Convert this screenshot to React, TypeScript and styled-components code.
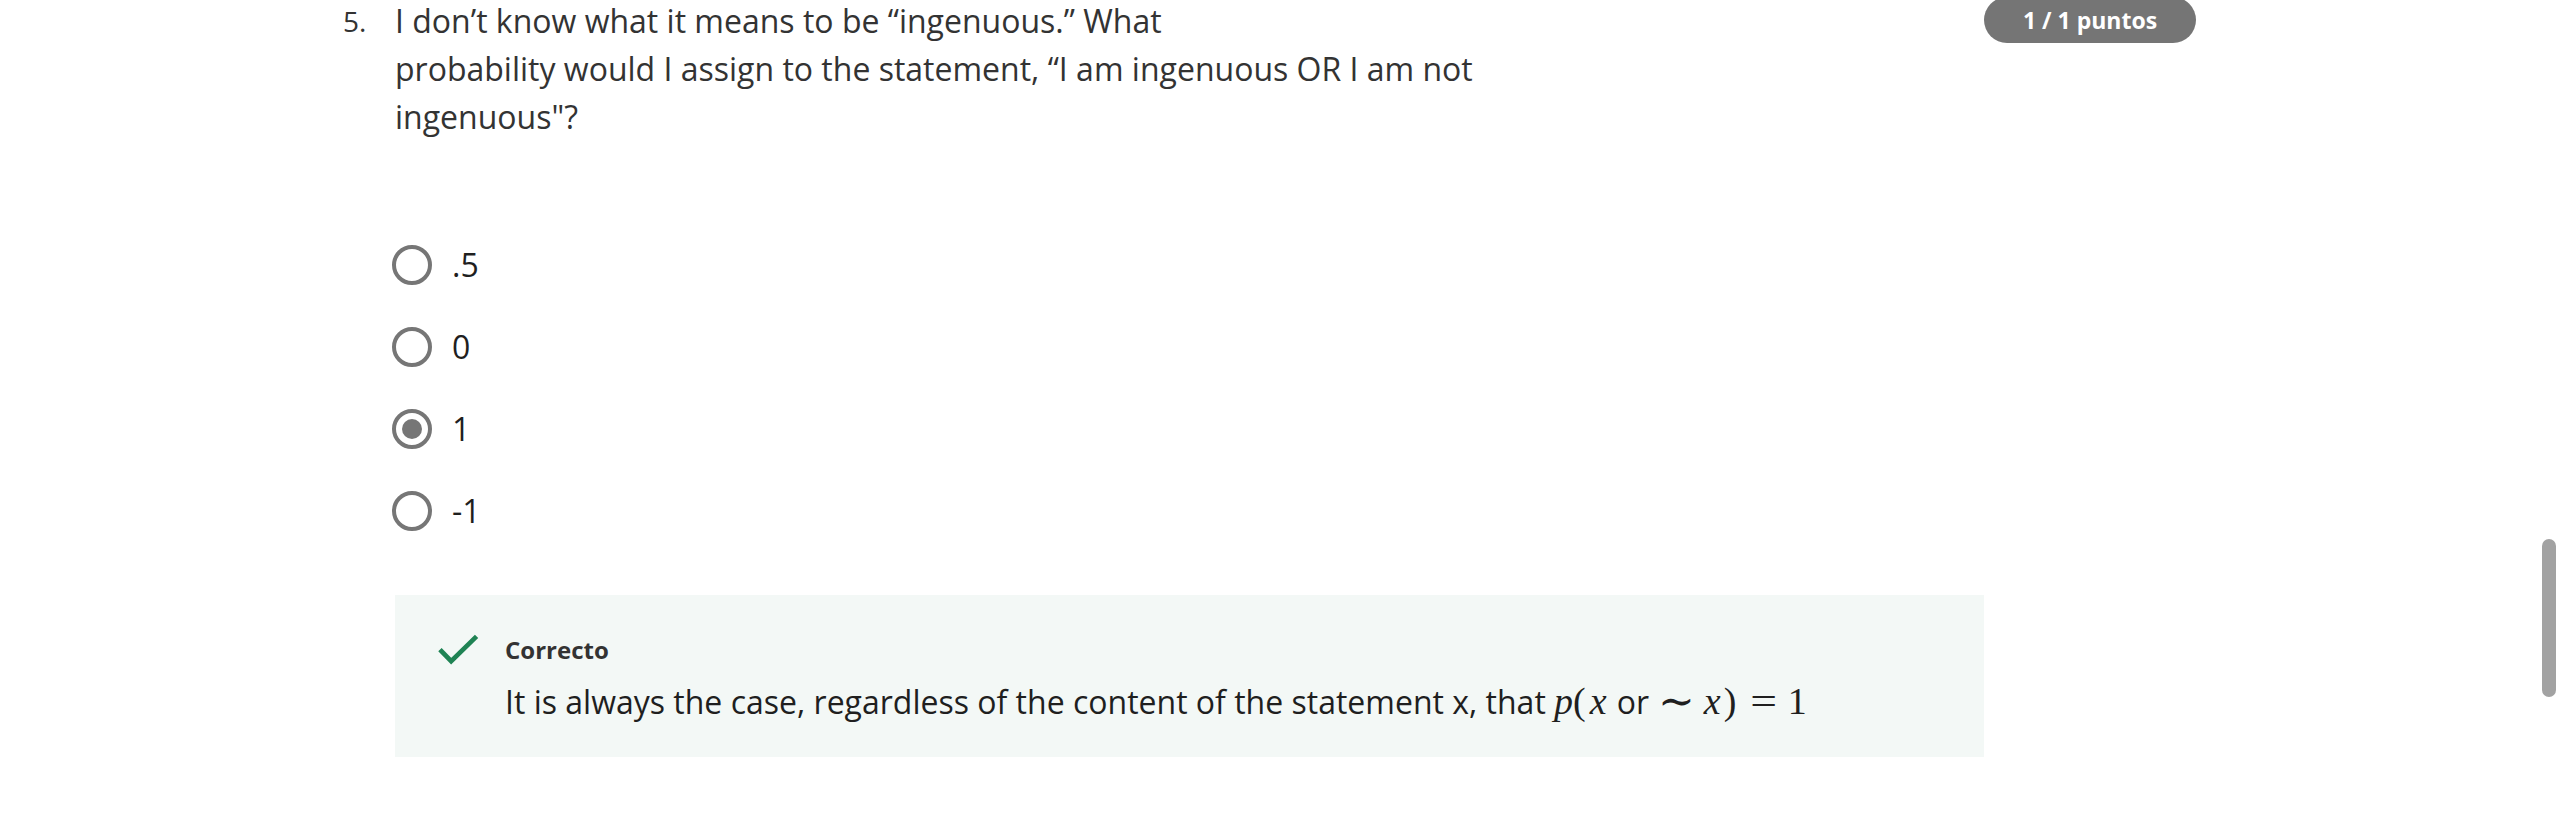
import styled, { createGlobalStyle } from "styled-components";

const GlobalStyle = createGlobalStyle`
  html, body {
    margin: 0;
    padding: 0;
    background: #ffffff;
    overflow: hidden;
  }
  body {
    font-family: "Open Sans", "Noto Sans", sans-serif;
    color: #333333;
  }
`;

const options = [".5", "0", "1", "-1"];
const selected = "1";

function CheckIcon() {
  return (
    <svg width="42" height="32" viewBox="0 0 42 32" fill="none">
      <polyline
        points="2,15.5 13.5,27.5 39.5,2"
        stroke="#1f8354"
        strokeWidth="4.8"
        strokeLinejoin="miter"
        fill="none"
      />
    </svg>
  );
}

function App() {
  return (
    <>
      <GlobalStyle />
      <Page>
        <QuestionRow>
          <Number>5.</Number>
          <Content>
            <Prompt>
              I don’t know what it means to be “ingenuous.” What
              <br />
              probability would I assign to the statement, “I am ingenuous OR I
              am not ingenuous"?
            </Prompt>

            <OptionList>
              {options.map((opt) => (
                <Option key={opt}>
                  <Radio $checked={opt === selected} />
                  <OptionLabel>{opt}</OptionLabel>
                </Option>
              ))}
            </OptionList>

            <Feedback>
              <IconCell>
                <CheckIcon />
              </IconCell>
              <FeedbackText>
                <FeedbackTitle>Correcto</FeedbackTitle>
                <Explanation>
                  It is always the case, regardless of the content of the
                  statement x, that{" "}
                  <MathExpr>
                    <MathVar>p</MathVar>
                    <MathSym>(</MathSym>
                    <MathVar $left={4}>x</MathVar>
                    <MathText>or</MathText>
                    <Tilde>∼</Tilde>
                    <MathVar>x</MathVar>
                    <MathSym $left={3}>)</MathSym>
                    <MathSym $left={17} $right={13} $wide>=</MathSym>
                    <MathSym>1</MathSym>
                  </MathExpr>
                </Explanation>
              </FeedbackText>
            </Feedback>
          </Content>
          <ScoreCell>
            <Badge>1 / 1 puntos</Badge>
          </ScoreCell>
        </QuestionRow>
      </Page>
      <ScrollThumb />
    </>
  );
}

export default App;

const Page = styled.div`
  padding-left: 343px;
  margin-top: -3px;
`;

const QuestionRow = styled.div`
  display: grid;
  grid-template-columns: 52px 1589px 212px;
  align-items: start;
`;

const Number = styled.div`
  font-size: 28px;
  line-height: 48px;
  color: #333333;
`;

const Content = styled.div`
  display: flex;
  flex-direction: column;
`;

const Prompt = styled.div`
  font-size: 32px;
  line-height: 48px;
  color: #333333;
  max-width: 1150px;
`;

const OptionList = styled.div`
  margin-top: 83px;
  margin-left: -3px;
  display: flex;
  flex-direction: column;
`;

const Option = styled.label`
  height: 82px;
  display: flex;
  align-items: center;
  gap: 20px;
`;

const Radio = styled.span<{ $checked?: boolean }>`
  width: 40px;
  height: 40px;
  box-sizing: border-box;
  border: 4px solid #767676;
  border-radius: 50%;
  display: flex;
  align-items: center;
  justify-content: center;

  &::after {
    content: "";
    width: 20px;
    height: 20px;
    border-radius: 50%;
    background: #767676;
    display: ${(p) => (p.$checked ? "block" : "none")};
  }
`;

const OptionLabel = styled.span`
  font-size: 32px;
  line-height: 48px;
  color: #1f1f1f;
`;

const Feedback = styled.div`
  margin-top: 43px;
  background: #f3f8f6;
  padding: 37px 0 31px 43px;
  display: flex;
  gap: 26px;
`;

const IconCell = styled.div`
  padding-top: 2px;
  width: 41px;
  display: flex;
`;

const FeedbackText = styled.div`
  display: flex;
  flex-direction: column;
`;

const FeedbackTitle = styled.div`
  font-size: 24px;
  line-height: 36px;
  font-weight: 700;
  color: #333333;
`;

const Explanation = styled.div`
  margin-top: 10px;
  font-size: 32px;
  line-height: 48px;
  color: #1f1f1f;
  white-space: nowrap;
`;

const MathExpr = styled.span`
  font-family: "Liberation Serif", "DejaVu Serif", serif;
  font-size: 38px;
  line-height: 0;
  color: #1f1f1f;
`;

const MathVar = styled.i<{ $left?: number }>`
  font-style: italic;
  margin-left: ${(p) => p.$left ?? 0}px;
`;

const MathSym = styled.span<{ $left?: number; $right?: number; $wide?: boolean }>`
  display: inline-block;
  margin-left: ${(p) => p.$left ?? 0}px;
  margin-right: ${(p) => p.$right ?? 0}px;
  transform: ${(p) => (p.$wide ? "scaleX(1.25)" : "none")};
`;

const Tilde = styled.span`
  display: inline-block;
  font-size: 44px;
  line-height: 0;
  vertical-align: -2px;
  margin: 0 9px 0 9px;
`;

const MathText = styled.span`
  font-family: "Open Sans", "Noto Sans", sans-serif;
  font-size: 32px;
  margin-left: 10px;
`;

const ScoreCell = styled.div`
  display: flex;
`;

const Badge = styled.div`
  width: 212px;
  height: 46px;
  border-radius: 23px;
  background: #757575;
  color: #ffffff;
  font-size: 23px;
  font-weight: 700;
  display: flex;
  align-items: center;
  justify-content: center;
`;

const ScrollThumb = styled.div`
  position: fixed;
  left: 2542px;
  top: 539px;
  width: 14px;
  height: 158px;
  border-radius: 7px;
  background: #a2a2a2;
`;
